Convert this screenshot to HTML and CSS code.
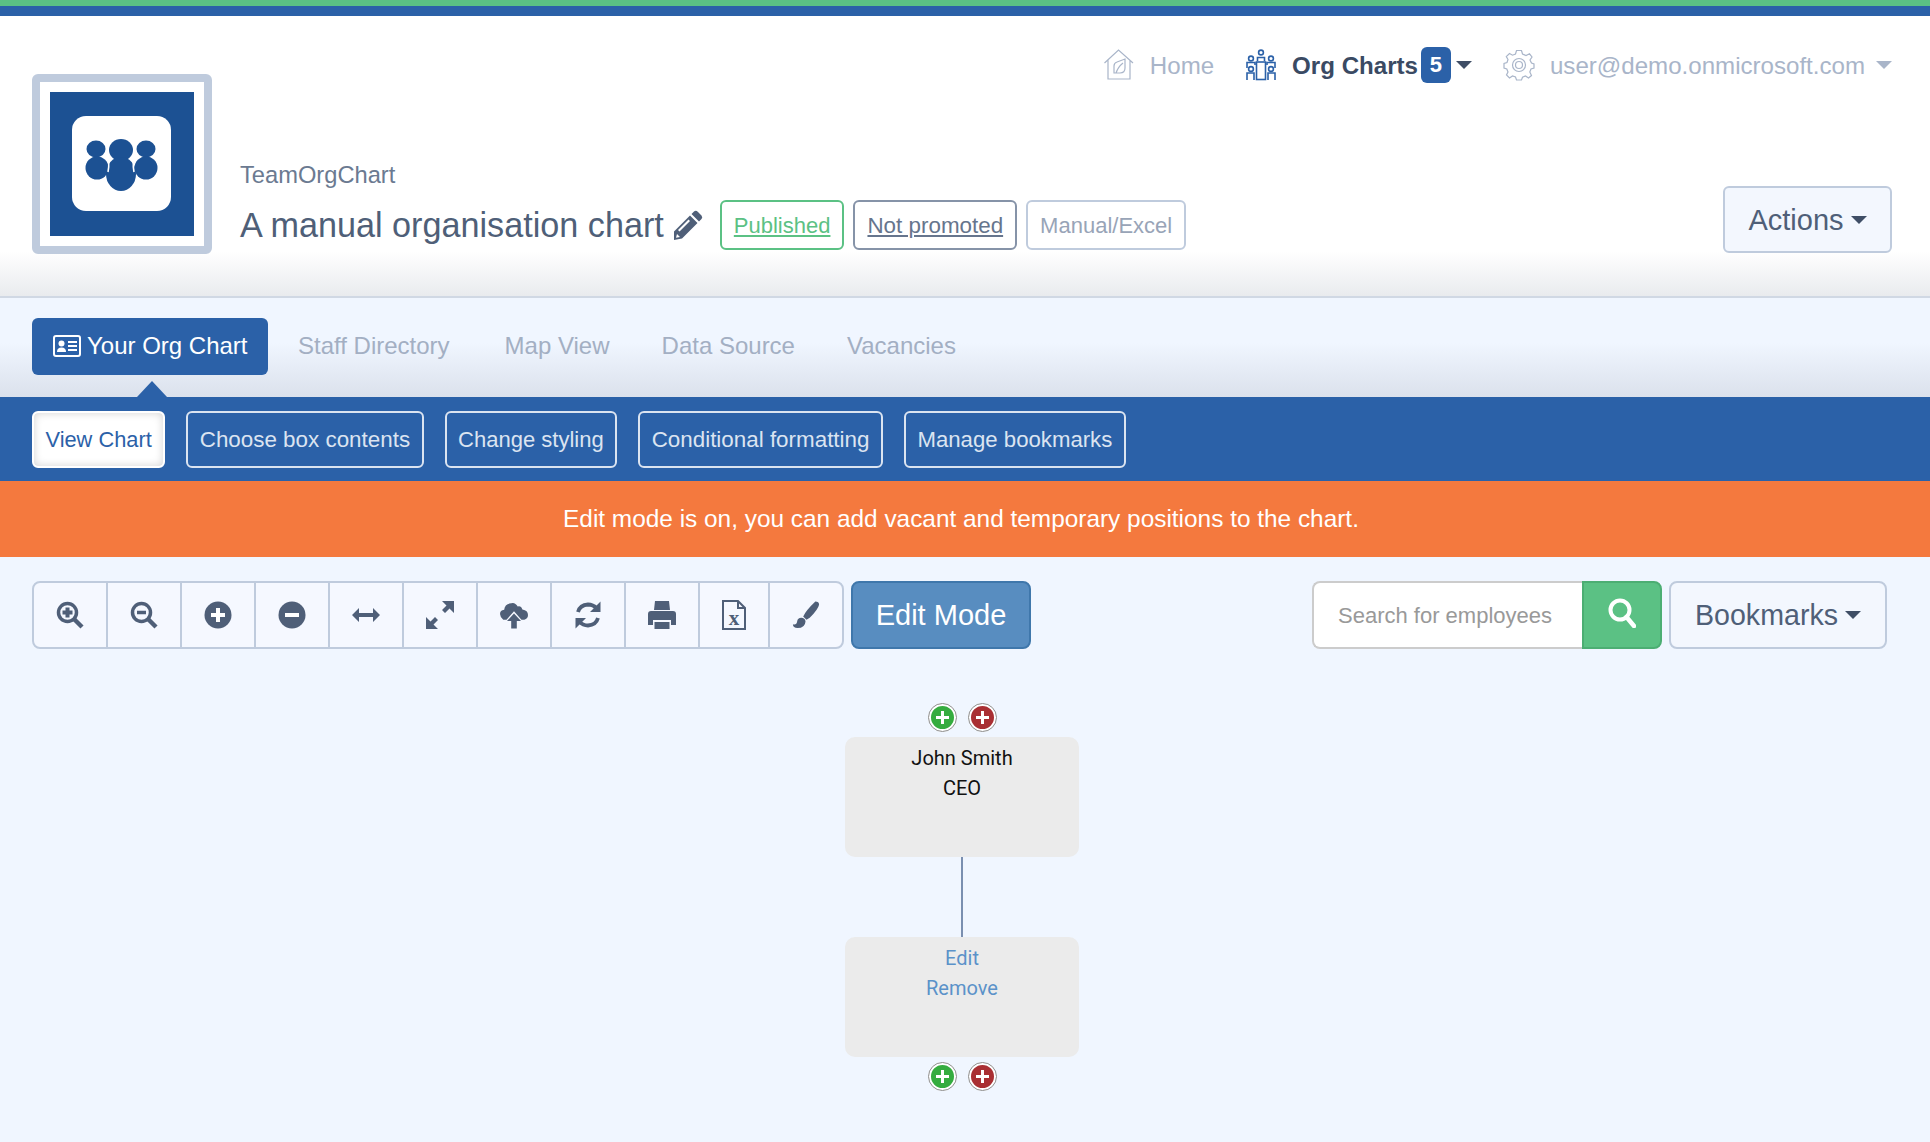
FILE: index.html
```html
<!DOCTYPE html>
<html lang="en">
<head>
<meta charset="utf-8">
<title>A manual organisation chart</title>
<link rel="stylesheet" href="styles.css">
</head>
<body>
<div class="stripe-green"></div>
<div class="stripe-blue"></div>
<header class="header">
  <div class="logo">
    <svg class="logo-img" viewBox="0 0 144 144">
      <rect width="144" height="144" fill="#1c5193"/>
      <rect x="22" y="24" width="99" height="95" rx="14" fill="#fff"/>
      <g fill="#1c5193">
        <ellipse cx="46" cy="57" rx="9.5" ry="8.5"/><ellipse cx="47" cy="76" rx="11.5" ry="11.5"/>
        <ellipse cx="96" cy="57" rx="9.5" ry="8.5"/><ellipse cx="96" cy="76" rx="11.5" ry="11.5"/>
        <ellipse cx="71" cy="58" rx="12" ry="11"/><ellipse cx="71" cy="82" rx="15" ry="17"/>
      </g>
      <g fill="none" stroke="#fff" stroke-width="1.6">
        <path d="M57 62 Q60 70 58 80"/><path d="M85 62 Q82 70 84 80"/>
      </g>
    </svg>
  </div>
  <div class="header-main">
    <nav class="topnav">
      <a class="topnav-item muted">
        <svg class="nav-icon" viewBox="0 0 32 32" fill="none" stroke="#a9b5c9" stroke-width="1.2"><path d="M1.5 14 L15.5 1 L30 14 M5 11 V30 H27 V11"/><path d="M11 24 V17 Q11 14 14 13 L22 10 V19 Q22 24 17 24 Z M13 24 Q15 18 20 14"/></svg>
        <span>Home</span>
      </a>
      <a class="topnav-item strong">
        <svg class="nav-icon" viewBox="0 0 32 32" fill="none" stroke="#2b61a8" stroke-width="1.6"><circle cx="16" cy="3.5" r="2.4"/><circle cx="6" cy="9.5" r="2.4"/><circle cx="26" cy="9.5" r="2.4"/><circle cx="6" cy="20" r="2.4"/><circle cx="26" cy="20" r="2.4"/><path d="M12.5 12 V8.5 H19.500 V12 M2 19 V13.500 H10 V16 M30 19 V13.500 H22 V16 M2 31 V24 H9 V31 M30 31 V24 H23 V31"/><rect x="11.500" y="13" width="9" height="17.500"/></svg>
        <span class="org-label">Org Charts</span><b class="badge">5</b><i class="caret caret-lg"></i>
      </a>
      <a class="topnav-item muted user">
        <svg class="nav-icon" viewBox="0 0 32 32" fill="none" stroke="#a9b5c9" stroke-width="1.2"><circle cx="16" cy="16" r="6.500"/><circle cx="16" cy="16" r="3.500"/><path d="M13.500 1.500 H18.500 L19.500 5 L23 6.500 L26.500 4.800 L29 8 L27 11 L28.500 14 L31 15 V19 L28 20 L26.800 23 L28.500 26.500 L25.500 29 L22.500 27 L19.500 28.300 L18.500 31 H13.500 L12.500 28 L9.500 27 L6.500 29 L3.500 26 L5 23 L3.800 20 L1 19 V14.500 L4 13.500 L5 10.500 L3.300 7.500 L6.500 4.500 L9.500 6.200 L12.500 5 Z"/></svg>
        <span>user@demo.onmicrosoft.com</span><i class="caret caret-lg caret-muted"></i>
      </a>
    </nav>
    <div class="titlebar">
      <div class="title-block">
        <div class="org-name">TeamOrgChart</div>
        <div class="title-row">
          <h1 class="title">A manual organisation chart</h1>
          <svg class="pencil" viewBox="0 0 30 30"><path fill="#4f5f78" d="M21 1.500 Q23 0 25 2 L28.500 5.500 Q30 7.500 28.500 9 L26 11.500 L18.500 4 Z M17 5.500 L24.500 13 L9 28.500 L1 30 L1 21.500 Z"/><path fill="#fff" d="M15.500 9.500 L17 11 L6.500 21.500 L5 20 Z M4 24 L7 27 L3 27.700 Z"/></svg>
          <a class="tag tag-green">Published</a>
          <a class="tag tag-dark">Not promoted</a>
          <span class="tag tag-grey">Manual/Excel</span>
        </div>
      </div>
      <button class="actions-btn">Actions<i class="caret caret-lg"></i></button>
    </div>
  </div>
</header>
<nav class="tabs">
  <a class="tab tab-active">
    <svg class="card-icon" viewBox="0 0 28 22"><rect x="1" y="1" width="26" height="20" rx="2" fill="none" stroke="#fff" stroke-width="2"/><circle cx="8.500" cy="8.500" r="3" fill="#fff"/><path fill="#fff" d="M4 17 Q4 12.500 8.500 12.500 Q13 12.500 13 17 Z"/><path stroke="#fff" stroke-width="1.800" d="M15 7 H24 M15 11 H24 M15 15 H24"/></svg>
    Your Org Chart
  </a>
  <a class="tab">Staff Directory</a>
  <a class="tab">Map View</a>
  <a class="tab">Data Source</a>
  <a class="tab">Vacancies</a>
</nav>
<div class="subnav">
  <a class="subbtn subbtn-active">View Chart</a>
  <a class="subbtn">Choose box contents</a>
  <a class="subbtn">Change styling</a>
  <a class="subbtn">Conditional formatting</a>
  <a class="subbtn">Manage bookmarks</a>
</div>
<div class="notice">Edit mode is on, you can add vacant and temporary positions to the chart.</div>
<main class="content">
  <div class="toolbar">
    <div class="toolgroup">
      <button class="tool"><svg class="ti" viewBox="0 0 28 28"><circle cx="11.500" cy="11.500" r="9" fill="none" stroke="#4f5f78" stroke-width="3.500"/><path d="M18 18 L26 26" stroke="#4f5f78" stroke-width="4.500"/><path d="M11.500 6.500 V16.500 M6.500 11.500 H16.500" stroke="#4f5f78" stroke-width="4"/></svg></button>
      <button class="tool"><svg class="ti" viewBox="0 0 28 28"><circle cx="11.500" cy="11.500" r="9" fill="none" stroke="#4f5f78" stroke-width="3.500"/><path d="M18 18 L26 26" stroke="#4f5f78" stroke-width="4.500"/><path d="M7 11.500 H16" stroke="#4f5f78" stroke-width="3.500"/></svg></button>
      <button class="tool"><svg class="ti" viewBox="0 0 28 28"><circle cx="14" cy="14" r="13.500" fill="#4f5f78"/><path d="M14 7 V21 M7 14 H21" stroke="#fff" stroke-width="4"/></svg></button>
      <button class="tool"><svg class="ti" viewBox="0 0 28 28"><circle cx="14" cy="14" r="13.500" fill="#4f5f78"/><path d="M7 14 H21" stroke="#fff" stroke-width="4"/></svg></button>
      <button class="tool"><svg class="ti" viewBox="0 0 28 28"><path fill="#4f5f78" d="M0 14 L7 7 V12 H21 V7 L28 14 L21 21 V16 H7 V21 Z"/></svg></button>
      <button class="tool"><svg class="ti" viewBox="0 0 28 28"><path fill="#4f5f78" d="M16 0 H28 V12 L23.500 7.500 L19 12 L16 9 L20.500 4.500 Z M0 28 V16 L4.500 20.500 L9 16 L12 19 L7.500 23.500 L12 28 Z"/></svg></button>
      <button class="tool"><svg class="ti" viewBox="0 0 30 30"><path fill="#4f5f78" d="M7 20 H3.500 Q0 17 0 14 Q0 10 4.500 9.500 Q5 3 12 2.500 Q16 1 19 6 Q21 5 23 7 L24 9 Q30 10 30 15 Q30 19 26 20 H23 L15 11 Z"/><path fill="#4f5f78" d="M15 13.500 L22.500 21.500 H18 V29.500 H12 V21.500 H7.500 Z"/></svg></button>
      <button class="tool"><svg class="ti" viewBox="0 0 28 28" fill="none"><path d="M4 11 Q6 4 14 3.500 Q19 3.500 23 7.500" stroke="#4f5f78" stroke-width="3.800"/><path fill="#4f5f78" d="M26.500 0.500 V11 H16 Z M1.500 27.500 V17 H12 Z"/><path d="M24 17 Q22 24 14 24.500 Q9 24.500 5 20.500" stroke="#4f5f78" stroke-width="3.800"/></svg></button>
      <button class="tool"><svg class="ti" viewBox="0 0 28 28"><path fill="#4f5f78" d="M7 0 H21 L22 9 H6 Z M3 10 H25 Q28 10 28 13 V24 H23 V19 H5 V24 H0 V13 Q0 10 3 10 Z M6.500 21 H21.500 V28 H6.500 Z"/></svg></button>
      <button class="tool tool-narrow"><svg class="ti ti-file" viewBox="0 0 24 30"><path fill="none" stroke="#4f5f78" stroke-width="2" d="M1 1 H16 L23 8 V29 H1 Z M16 1 V8 H23"/><text class="ti-x" x="12" y="25" text-anchor="middle">x</text></svg></button>
      <button class="tool tool-last"><svg class="ti" viewBox="0 0 28 30"><path fill="#4f5f78" d="M24 0.500 Q28 0.500 28 4 Q27 9 18 18 L14.500 20 L11 16.500 Q14 10 24 0.500 Z M9 18 Q13 18 13.500 22 Q13 29 5 29 Q0 29 0 25 Q4 26 4.500 22 Q5 18 9 18 Z"/></svg></button>
    </div>
    <button class="edit-btn">Edit Mode</button>
    <div class="toolbar-right">
      <div class="search">
        <span class="search-input">Search for employees</span>
        <button class="search-btn"><svg class="search-icon" viewBox="0 0 28 30"><circle cx="12" cy="12" r="9.500" fill="none" stroke="#fff" stroke-width="4"/><path d="M18.500 19 L26 28" stroke="#fff" stroke-width="4.500" stroke-linecap="round"/></svg></button>
      </div>
      <button class="bookmarks-btn">Bookmarks<i class="caret caret-lg"></i></button>
    </div>
  </div>
  <div class="chart">
    <div class="node-actions">
      <span class="round round-green"></span><span class="round round-red"></span>
    </div>
    <div class="node"><div>John Smith</div><div>CEO</div></div>
    <div class="link"></div>
    <div class="node node-empty"><a>Edit</a><a>Remove</a></div>
    <div class="node-actions node-actions-bottom">
      <span class="round round-green"></span><span class="round round-red"></span>
    </div>
  </div>
</main>
</body>
</html>
```
FILE: styles.css
```css
* { box-sizing: border-box; }
html, body { margin: 0; padding: 0; }
body {
  width: 1930px;
  height: 1142px;
  overflow: hidden;
  background: #f0f6ff;
  font-family: "Liberation Sans", Arial, sans-serif;
  color: #4f5f78;
}
button { font-family: inherit; cursor: pointer; }
.stripe-green { height: 6px; background: #5bc184; }
.stripe-blue { height: 10px; background: #2b61a8; }

.header {
  display: flex;
  gap: 28px;
  height: 282px;
  padding: 0 38px 0 32px;
  background: linear-gradient(#fff 84%, #e9ebee 100%);
  border-bottom: 2px solid #d0d8e4;
}
.logo {
  flex: none;
  width: 180px;
  height: 180px;
  margin-top: 58px;
  padding: 10px;
  background: #fff;
  border: 8px solid #bfcbdd;
  border-radius: 6px;
}
.logo-img { display: block; width: 144px; height: 144px; }
.header-main { flex: 1; display: flex; flex-direction: column; min-width: 0; }

.topnav {
  display: flex;
  justify-content: flex-end;
  align-items: center;
  height: 36px;
  margin-top: 31px;
  gap: 31px;
  font-size: 24.100px;
}
.topnav-item { display: flex; align-items: center; }
.topnav-item span { padding-top: 1px; }
.topnav-item.muted { color: #a9b5c9; }
.topnav-item.strong { color: #3a4a63; font-weight: 700; }
.org-label { margin-right: 3px; }
.nav-icon { width: 32px; height: 32px; margin-right: 15px; flex: none; }
.badge {
  display: flex;
  align-items: center;
  justify-content: center;
  width: 30px;
  height: 36px;
  border-radius: 6px;
  background: #2b61a8;
  color: #fff;
  font-size: 22px;
  font-weight: 700;
}
.caret {
  display: inline-block;
  width: 0;
  height: 0;
  border-style: solid;
  border-color: #3f4e66 transparent transparent;
}
.caret-lg { border-width: 8px 8px 0; margin-left: 5px; }
.caret-muted { border-top-color: #a9b5c9; margin-left: 11px; }

.titlebar {
  display: flex;
  justify-content: space-between;
  align-items: flex-end;
  margin-top: 75px;
}
.title-block { margin-bottom: 3px; }
.org-name { font-size: 23.700px; line-height: 28px; color: #6b7a91; margin: 3px 0 11px; }
.title-row { display: flex; align-items: center; }
.title { margin: 0; font-size: 34.200px; line-height: 50px; font-weight: 400; color: #4f5f78; }
.pencil { width: 30px; height: 30px; margin: 0 17px 0 9px; flex: none; }
.tag {
  display: flex;
  align-items: center;
  height: 50px;
  padding: 2px 12px 0;
  margin-right: 9px;
  border: 2px solid;
  border-radius: 6px;
  font-size: 22px;
  background: #fff;
}
.tag-green { color: #5bc184; border-color: #5bc184; text-decoration: underline; }
.tag-dark { color: #66758d; border-color: #8693a8; text-decoration: underline; font-size: 22.400px; }
.tag-grey { color: #98a4b7; border-color: #bfcbdd; }
.actions-btn {
  display: flex;
  align-items: center;
  justify-content: center;
  width: 169px;
  height: 67px;
  padding: 1px 0 0;
  background: #f3f7fe;
  border: 2px solid #bfcbdd;
  border-radius: 6px;
  color: #4f5f78;
  font-size: 29px;
}
.actions-btn .caret, .bookmarks-btn .caret { margin-left: 7px; }

.tabs {
  display: flex;
  align-items: flex-start;
  height: 99px;
  padding: 20px 0 0 32px;
  background: linear-gradient(#f0f6ff 45%, #dbe1ec 100%);
}
.tab {
  display: flex;
  align-items: center;
  height: 55px;
  padding: 0 25px;
  margin-right: 3px;
  font-size: 24px;
  white-space: nowrap;
  color: #a3afc3;
}
.tab:nth-child(2) { margin-right: 5px; }
.tab:nth-child(3), .tab:nth-child(4) { margin-right: 2px; }
.tab-active {
  position: relative;
  height: 57px;
  padding: 0 21px 2px;
  margin-right: 5px;
  width: 236px;
  background: #2b61a8;
  color: #fff;
  border-radius: 6px;
}
.tab-active::after {
  content: "";
  position: absolute;
  left: 105px;
  bottom: -22px;
  border-style: solid;
  border-width: 0 15.500px 16px;
  border-color: transparent transparent #2b61a8;
}
.card-icon { width: 28px; height: 22px; margin-right: 6px; flex: none; }

.subnav {
  display: flex;
  align-items: center;
  gap: 21px;
  height: 84px;
  padding-left: 32px;
  background: #2b61a8;
}
.subbtn {
  display: flex;
  align-items: center;
  height: 57px;
  padding: 1px 11.500px 0;
  border: 2px solid #dbe4f1;
  border-radius: 6px;
  font-size: 22.400px;
  color: #dbe4f1;
}
.subbtn:nth-child(3) { font-size: 22px; }
.subbtn:nth-child(5) { font-size: 22.200px; }
.subbtn-active {
  font-size: 21.800px;
  background: #fff;
  color: #2b61a8;
  border-color: #fff;
  box-shadow: inset 0 0 8px rgba(0,0,0,.18);
}
.notice {
  height: 76px;
  line-height: 76px;
  padding-right: 8px;
  text-align: center;
  background: #f4793e;
  color: #fff;
  font-size: 24.400px;
}

.content { padding: 24px 0 0 32px; }
.toolbar { display: flex; align-items: stretch; height: 68px; padding-right: 43px; }
.toolgroup {
  display: flex;
  background: #f5f8ff;
  border: 2px solid #bfcbdd;
  border-radius: 8px;
}
.tool {
  display: flex;
  align-items: center;
  justify-content: center;
  width: 74px;
  padding: 0;
  background: none;
  border: 0;
  border-right: 2px solid #bfcbdd;
}
.tool-narrow { width: 70px; }
.tool-last { width: 72px; border-right: 0; }
.ti { width: 28px; height: 28px; display: block; }
.ti-file { width: 24px; height: 30px; }
.ti-x { font-family: "Liberation Serif", serif; font-weight: 700; font-size: 21px; fill: #4f5f78; }
.edit-btn {
  width: 180px;
  margin-left: 7px;
  background: #588dc0;
  border: 2px solid #3f77ab;
  border-radius: 8px;
  color: #fff;
  font-size: 29px;
  padding: 0;
}
.toolbar-right { display: flex; margin-left: auto; gap: 7px; }
.search { display: flex; width: 350px; }
.search-input {
  display: flex;
  align-items: center;
  flex: 1;
  padding: 1px 0 0 24px;
  background: #fff;
  border: 2px solid #cccccc;
  border-right: 0;
  border-radius: 8px 0 0 8px;
  font-size: 22px;
  color: #999;
}
.search-btn {
  display: flex;
  align-items: center;
  justify-content: center;
  width: 80px;
  padding: 0 0 4px;
  background: #5bc184;
  border: 2px solid #4cae73;
  border-radius: 0 8px 8px 0;
}
.search-icon { width: 28px; height: 30px; }
.bookmarks-btn {
  display: flex;
  align-items: center;
  justify-content: center;
  width: 218px;
  padding: 0;
  background: #f3f7fe;
  border: 2px solid #bfcbdd;
  border-radius: 8px;
  color: #4f5f78;
  font-size: 28.600px;
}

.chart {
  display: flex;
  flex-direction: column;
  align-items: center;
  width: 234px;
  margin: 54px 0 0 813px;
  font-family: Roboto, "Liberation Sans", sans-serif;
}
.node-actions { display: flex; gap: 11px; height: 29px; margin-bottom: 5px; }
.node-actions-bottom { margin: 5px 0 0; }
.round {
  position: relative;
  width: 29px;
  height: 29px;
  border-radius: 50%;
  border: 3px solid #fff;
  outline: 1.500px solid #8c8c8c;
  outline-offset: -1.500px;
}
.round::before, .round::after {
  content: "";
  position: absolute;
  background: #fff;
}
.round::before { left: 5px; right: 5px; top: 10px; height: 3px; }
.round::after { top: 5px; bottom: 5px; left: 10px; width: 3px; }
.round-green { background: #35ac3f; }
.round-red { background: #a92f33; }
.node {
  width: 234px;
  height: 120px;
  padding-top: 6px;
  background: #ebebeb;
  border-radius: 10px;
  text-align: center;
  font-size: 20px;
  line-height: 30px;
  color: #111;
}
.node-empty a { display: block; color: #5b92c9; }
.link { width: 2px; height: 80px; background: #7a8fb0; }
```
